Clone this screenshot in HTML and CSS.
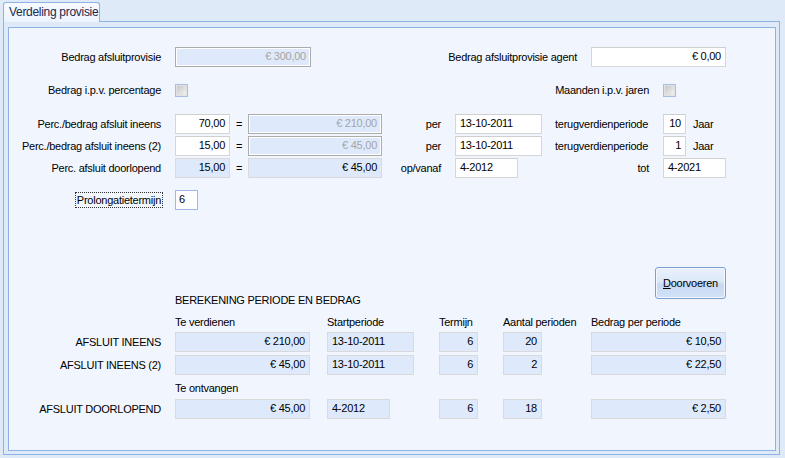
FILE: index.html
```html
<!DOCTYPE html>
<html>
<head>
<meta charset="utf-8">
<link rel="stylesheet" href="styles.css">
</head>
<body>
<div class="tabs"><div class="tab">Verdeling provisie</div></div>
<div class="page">
  <div class="frame">
    <div class="row r1">
      <div class="lbl">Bedrag afsluitprovisie</div>
      <div class="fld dis num w136">€ 300,00</div>
      <div class="lbl w266 mr14">Bedrag afsluitprovisie agent</div>
      <div class="fld num w135">€ 0,00</div>
    </div>
    <div class="row r2">
      <div class="lbl">Bedrag i.p.v. percentage</div>
      <div class="chk"></div>
      <div class="lbl w462 mr14">Maanden i.p.v. jaren</div>
      <div class="chk"></div>
    </div>
    <div class="row r3">
      <div class="lbl">Perc./bedrag afsluit ineens</div>
      <div class="fld num w55">70,00</div>
      <div class="eq">=</div>
      <div class="fld dis num w134">€ 210,00</div>
      <div class="lbl w59 mr14">per</div>
      <div class="fld w87">13-10-2011</div>
      <div class="txt ml13 w108">terugverdienperiode</div>
      <div class="fld num w23">10</div>
      <div class="txt ml7">Jaar</div>
    </div>
    <div class="row r4">
      <div class="lbl">Perc./bedrag afsluit ineens (2)</div>
      <div class="fld num w55">15,00</div>
      <div class="eq">=</div>
      <div class="fld dis num w134">€ 45,00</div>
      <div class="lbl w59 mr14">per</div>
      <div class="fld w87">13-10-2011</div>
      <div class="txt ml13 w108">terugverdienperiode</div>
      <div class="fld num w23">1</div>
      <div class="txt ml7">Jaar</div>
    </div>
    <div class="row r4">
      <div class="lbl">Perc. afsluit doorlopend</div>
      <div class="fld ro num w55">15,00</div>
      <div class="eq">=</div>
      <div class="fld ro num w134">€ 45,00</div>
      <div class="lbl w59 mr14">op/vanaf</div>
      <div class="fld w63">4-2012</div>
      <div class="lbl w131 mr14">tot</div>
      <div class="fld w63">4-2021</div>
    </div>
    <div class="row r6">
      <div class="lbl"><span class="focus">Prolongatietermijn</span></div>
      <div class="fld foc w23">6</div>
    </div>
    <div class="actions">
      <div class="title">BEREKENING PERIODE EN BEDRAG</div>
      <div class="btn"><span class="u">D</span>oorvoeren</div>
    </div>
    <div class="heads">
      <div class="w152">Te verdienen</div>
      <div class="w112">Startperiode</div>
      <div class="w64">Termijn</div>
      <div class="w88">Aantal perioden</div>
      <div>Bedrag per periode</div>
    </div>
    <div class="row g1">
      <div class="lbl">AFSLUIT INEENS</div>
      <div class="fld ro num w135">€ 210,00</div>
      <div class="fld ro w87 ml17">13-10-2011</div>
      <div class="fld ro num w39 ml25">6</div>
      <div class="fld ro num w39 ml25">20</div>
      <div class="fld ro num w135 ml49">€ 10,50</div>
    </div>
    <div class="row g2">
      <div class="lbl">AFSLUIT INEENS (2)</div>
      <div class="fld ro num w135">€ 45,00</div>
      <div class="fld ro w87 ml17">13-10-2011</div>
      <div class="fld ro num w39 ml25">6</div>
      <div class="fld ro num w39 ml25">2</div>
      <div class="fld ro num w135 ml49">€ 22,50</div>
    </div>
    <div class="sub">Te ontvangen</div>
    <div class="row g3">
      <div class="lbl">AFSLUIT DOORLOPEND</div>
      <div class="fld ro num w135">€ 45,00</div>
      <div class="fld ro w63 ml17">4-2012</div>
      <div class="fld ro num w39 ml49">6</div>
      <div class="fld ro num w39 ml25">18</div>
      <div class="fld ro num w135 ml49">€ 2,50</div>
    </div>
  </div>
</div>
</body>
</html>
```
FILE: styles.css
```css
* { box-sizing: border-box; }
html, body { margin: 0; padding: 0; }
body {
  width: 785px;
  height: 458px;
  background: #dfeaf9;
  font-family: "Liberation Sans", Arial, sans-serif;
  font-size: 11px;
  letter-spacing: -0.25px;
  color: #000;
  overflow: hidden;
}
.tabs {
  height: 21px;
  padding: 2px 0 0 3px;
  display: flex;
}
.tab {
  position: relative;
  z-index: 1;
  width: 97px;
  height: 20px;
  border: 1px solid #8db2e3;
  border-bottom: none;
  border-radius: 3px 3px 0 0;
  background: linear-gradient(#f7faff, #eef4fd);
  color: #1a2850;
  font-size: 12px;
  letter-spacing: -0.3px;
  padding: 1px 0 0 5px;
  line-height: 16px;
}
.page {
  margin-left: 3px;
  width: 777px;
  height: 434px;
  border: 1px solid #8db2e3;
  background: #dfeaf9;
  padding: 5px 3px 3px 4px;
  display: flex;
}
.frame {
  flex: 1;
  border: 1px solid #8db2e3;
  background: #f1f6fe;
  display: flex;
  flex-direction: column;
}
.row {
  display: flex;
  align-items: center;
  height: 20px;
  flex: none;
}
.r1 { margin-top: 19px; }
.r2 { margin-top: 13px; }
.r3 { margin-top: 14px; }
.r4 { margin-top: 2px; }
.r6 { margin-top: 12px; }
.g1 { margin-top: 3px; }
.g2 { margin-top: 3px; }
.g3 { margin-top: 4px; }

.lbl {
  width: 152px;
  margin-right: 14px;
  text-align: right;
  white-space: nowrap;
  flex: none;
}
.txt { white-space: nowrap; flex: none; }
.eq { width: 18px; padding-left: 6px; flex: none; }

.w23 { width: 23px; }
.w39 { width: 39px; }
.w55 { width: 55px; }
.w59 { width: 59px; }
.w63 { width: 63px; }
.w64 { width: 64px; }
.w87 { width: 87px; }
.w88 { width: 88px; }
.w108 { width: 108px; }
.w112 { width: 112px; }
.w131 { width: 131px; }
.w134 { width: 134px; }
.w135 { width: 135px; }
.w136 { width: 136px; }
.w152 { width: 152px; }
.w266 { width: 266px; }
.w462 { width: 461px; }
.mr14 { margin-right: 14px; }
.ml7 { margin-left: 7px; }
.ml13 { margin-left: 13px; }
.ml17 { margin-left: 17px; }
.ml25 { margin-left: 25px; }
.ml49 { margin-left: 49px; }

.fld {
  height: 20px;
  flex: none;
  background: #fff;
  border: 1px solid #d6d6d6;
  border-top-color: #cfcfcf;
  padding: 1px 4px 0 4px;
  line-height: 14px;
  white-space: nowrap;
  overflow: hidden;
}
.fld.num { text-align: right; }
.fld.dis {
  background: #deeafc;
  border: 1px solid #acacac;
  box-shadow: inset 0 0 0 1px #fff;
  color: #a5a5a5;
}
.fld.ro {
  background: #deeafc;
  border: 1px solid #d9d9d9;
}
.fld.foc {
  border-color: #9db9e2;
  padding-left: 3px;
}
.chk {
  width: 13px;
  height: 13px;
  flex: none;
  border: 1px solid #a6bee3;
  background: linear-gradient(135deg, #c4c4c4, #f6f6f6);
  box-shadow: inset 0 0 0 1px #e2e2e2;
}
.focus {
  border: 1px dotted #333;
  padding: 1px 1px 1px 1px;
  margin-right: -2px;
}
.actions {
  display: flex;
  height: 40px;
  margin-top: 57px;
  padding-left: 166px;
  flex: none;
}
.title {
  width: 480px;
  align-self: flex-end;
  line-height: 14px;
}
.btn {
  width: 71px;
  height: 32px;
  border: 1px solid #7c9fd3;
  border-radius: 3px;
  background: linear-gradient(#eaf1fc 0%, #dce8f8 45%, #c6d9f3 55%, #d3e2f6 100%);
  box-shadow: inset 0 0 0 1px #f4f8fe;
  display: flex;
  align-items: center;
  justify-content: center;
}
.u { text-decoration: underline; }
.heads {
  display: flex;
  margin-top: 8px;
  padding-left: 166px;
  line-height: 14px;
  height: 14px;
  flex: none;
  white-space: nowrap;
}
.heads > div { flex: none; }
.sub {
  margin-top: 6px;
  padding-left: 166px;
  line-height: 14px;
  height: 14px;
  flex: none;
}
```
